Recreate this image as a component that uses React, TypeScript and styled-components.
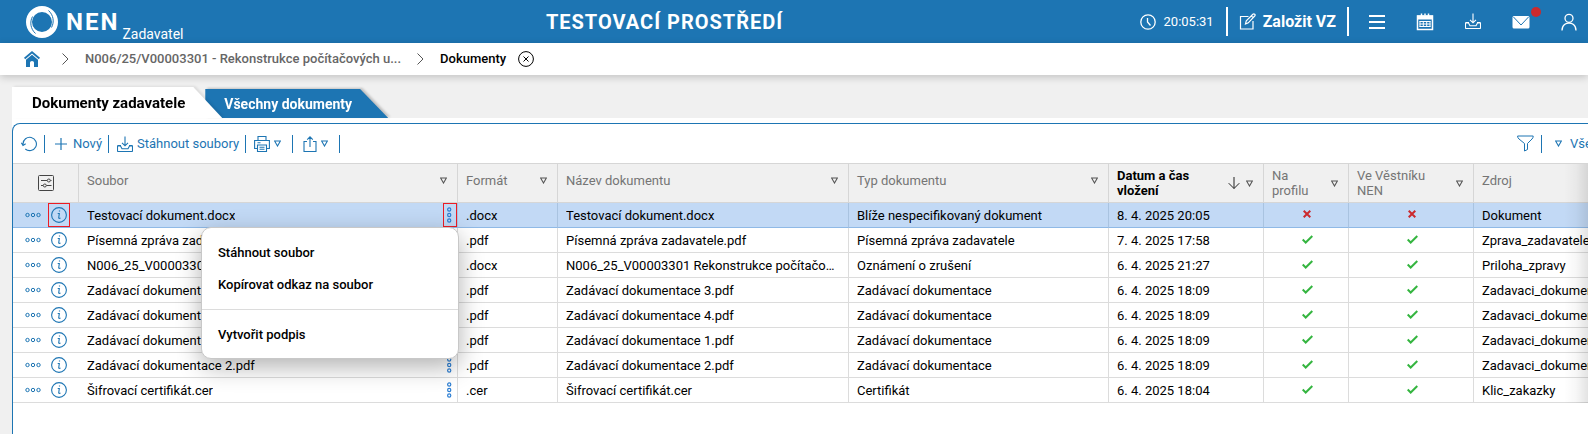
import React from "react";
import styled, { createGlobalStyle, css } from "styled-components";

const blue = "#1d75b3";

const GlobalStyle = createGlobalStyle`
  *, *::before, *::after { box-sizing: border-box; }
  body {
    margin: 0;
    background: #f0f0f0;
    color: #000;
    font-family: Roboto, "Liberation Sans", sans-serif;
    font-size: 13px;
    line-height: 16px;
  }
  button {
    font: inherit;
    color: inherit;
    background: none;
    border: 0;
    padding: 0;
    cursor: pointer;
  }
  a { color: inherit; text-decoration: none; }
  svg { display: block; flex: none; }
`;

const Page = styled.div`
  display: flex;
  flex-direction: column;
  min-height: 100vh;
  overflow: hidden;
`;

/* ---------- top bar ---------- */

const TopBar = styled.header`
  display: flex;
  align-items: center;
  justify-content: space-between;
  height: 43px;
  padding: 0 10px 0 26px;
  background: ${blue};
  color: #fff;
`;

const Brand = styled.a`
  display: flex;
  align-items: center;
  gap: 8px;
  padding-right: 6px;
`;

const BrandName = styled.span`
  font-size: 24px;
  line-height: 24px;
  font-weight: 700;
  letter-spacing: 2px;
`;

const BrandRole = styled.span`
  align-self: flex-end;
  margin-left: -5px;
  padding-top: 24px;
  font-size: 14px;
  line-height: 16px;
`;

const EnvTitle = styled.h1`
  margin: 0;
  font-size: 20px;
  line-height: 24px;
  font-weight: 700;
  letter-spacing: 1px;
`;

const TopTools = styled.div`
  display: flex;
  align-items: center;
`;

const Clock = styled.time`
  display: flex;
  align-items: center;
  gap: 8px;
  padding-right: 12px;
`;

const CreateButton = styled.button`
  display: flex;
  align-items: center;
  gap: 7px;
  height: 29px;
  padding: 0 11px;
  border: solid #fff;
  border-width: 0 2px;
  font-size: 16px;
  font-weight: 700;
`;

const TopIcons = styled.nav`
  display: flex;
  gap: 30px;
  padding-left: 19px;
`;

const TopIconButton = styled.button`
  position: relative;
  display: flex;
  justify-content: center;
  width: 18px;
`;

const Alert = styled.span`
  position: absolute;
  top: -6px;
  right: -11px;
  width: 10px;
  height: 10px;
  border-radius: 50%;
  background: #cb2a2e;
`;

/* ---------- breadcrumb ---------- */

const Crumbs = styled.nav`
  display: flex;
  align-items: center;
  height: 32px;
  padding-left: 24px;
  background: #fff;
  box-shadow: 0 2px 8px rgba(0, 0, 0, 0.2);
  font-weight: 500;
`;

const HomeLink = styled.a`
  padding-right: 6px;
`;

const CrumbLink = styled.a`
  color: #666;
`;

const Separator = styled.span`
  display: flex;
  padding: 0 16px;
`;

const CloseCrumb = styled.button`
  margin-left: 12px;
`;

/* ---------- tabs ---------- */

const Tabs = styled.div`
  display: flex;
  align-items: flex-end;
  padding: 12px 0 0 12px;
`;

const TabShadow = styled.div<{ $active?: boolean }>`
  position: relative;
  z-index: ${(p) => (p.$active ? 1 : 0)};
  margin-left: ${(p) => (p.$active ? "0" : "-17px")};
  filter: drop-shadow(2px -1px 1px rgba(0, 0, 0, ${(p) => (p.$active ? 0.08 : 0.2)}));
`;

const Tab = styled.button<{ $active?: boolean }>`
  display: block;
  font-weight: 700;
  ${(p) =>
    p.$active
      ? css`
          height: 31px;
          padding: 0 37px 0 20px;
          background: #fff;
          font-size: 15px;
          clip-path: polygon(0 0, calc(100% - 29px) 0, 100% 100%, 0 100%);
        `
      : css`
          height: 29px;
          padding: 0 36px 0 19px;
          background: ${blue};
          color: #fff;
          font-size: 14px;
          clip-path: polygon(0 0, calc(100% - 28px) 0, 100% 100%, 0 100%);
        `}
`;

/* ---------- panel ---------- */

const Sheet = styled.main`
  display: flex;
  flex: 1;
  margin-left: 12px;
  padding-top: 5px;
  background: #fff;
`;

const Panel = styled.section`
  flex: 1;
  min-width: 0;
  border: solid ${blue};
  border-width: 1px 0 0 1px;
  border-top-left-radius: 8px;
`;

const Toolbar = styled.div`
  display: flex;
  align-items: center;
  height: 39px;
  padding-left: 8px;
  color: ${blue};
`;

const Tool = styled.button<{ $left?: number; $right?: number; $gap?: number }>`
  display: flex;
  flex: none;
  align-items: center;
  gap: ${(p) => p.$gap ?? 4}px;
  height: 18px;
  padding: 0 ${(p) => p.$right ?? 6}px 0 ${(p) => p.$left ?? 8}px;
  border-right: 1px solid ${blue};
`;

const ToolbarEnd = styled.div`
  display: flex;
  width: 71px;
  margin-left: auto;
  overflow: hidden;
`;

const ViewPicker = styled.button`
  display: flex;
  flex: none;
  align-items: center;
  gap: 8px;
  padding-left: 13px;
`;

/* ---------- table ---------- */

const TableFrame = styled.div`
  position: relative;
`;

const EdgeFade = styled.div`
  position: absolute;
  inset: 1px 0 0 auto;
  width: 24px;
  background: linear-gradient(to right, rgba(0, 0, 0, 0), rgba(0, 0, 0, 0.03) 50%, rgba(0, 0, 0, 0.11));
  pointer-events: none;
`;

const Grid = styled.table`
  width: 100%;
  table-layout: fixed;
  border-collapse: separate;
  border-spacing: 0;
`;

const Col = styled.col<{ $width?: number }>`
  width: ${(p) => (p.$width ? `${p.$width}px` : "auto")};
`;

const Th = styled.th<{ $strong?: boolean; $wrap?: boolean; $last?: boolean }>`
  height: 40px;
  padding: 0 10px ${(p) => (p.$wrap ? 0 : 6)}px 8px;
  border: solid #d6d6d6;
  border-width: 1px ${(p) => (p.$last ? 0 : 1)}px 1px 0;
  background: #f0f0f0;
  color: ${(p) => (p.$strong ? "#000" : "#757575")};
  font-weight: ${(p) => (p.$strong ? 700 : 400)};
  line-height: 15px;
  text-align: left;
`;

const HeadInner = styled.div`
  display: flex;
  align-items: center;
  justify-content: space-between;
  gap: 12px;
`;

const HeadTools = styled.span`
  display: flex;
  align-items: center;
  gap: 6px;
  color: #555;
`;

const HeadSettings = styled.button`
  display: block;
  margin: 6px auto 0 17px;
  color: #444;
`;

const Td = styled.td<{ $last?: boolean }>`
  position: relative;
  height: 25px;
  padding: 0 ${(p) => (p.$last ? 0 : 8)}px 0 8px;
  border: solid #dcdcdc;
  border-width: 0 ${(p) => (p.$last ? 0 : 1)}px 1px 0;
`;

const Tr = styled.tr<{ $selected?: boolean }>`
  ${(p) =>
    p.$selected &&
    css`
      background: #c2d9f5;
      ${Td} {
        border-right-color: #a9c3e0;
        border-bottom-color: #8fb9e6;
      }
    `}
`;

const ActionsTd = styled(Td)`
  padding: 0;
  border-right-width: 0;
`;

const Actions = styled.div`
  display: flex;
  align-items: center;
  gap: 7px;
  padding-left: 12px;
  color: ${blue};
`;

const IconButton = styled.button<{ $marked?: boolean; $width: number }>`
  display: flex;
  align-items: center;
  justify-content: center;
  width: ${(p) => p.$width}px;
  height: 24px;
  border: 1px solid ${(p) => (p.$marked ? "#ed1c24" : "transparent")};
`;

const CellText = styled.span`
  display: block;
  padding-top: 2px;
  overflow: hidden;
  text-overflow: ellipsis;
  white-space: nowrap;
`;

const ClippedText = styled(CellText)`
  text-overflow: clip;
`;

const FileTd = styled(Td)`
  padding-right: 0;
`;

const FileCell = styled.div`
  display: flex;
  align-items: center;
  justify-content: space-between;
`;

const Mark = styled.span`
  display: flex;
  justify-content: center;
  padding: 0 0 2px 2px;
`;

/* ---------- context menu ---------- */

const Menu = styled.div`
  position: absolute;
  z-index: 5;
  top: 100%;
  right: -2px;
  width: 258px;
  padding: 9px 0 7px;
  border: 1px solid #c8c8c8;
  border-radius: 10px;
  background: #fff;
  box-shadow: 0 8px 24px rgba(0, 0, 0, 0.3);
`;

const MenuItem = styled.button`
  display: block;
  width: 100%;
  height: 32px;
  padding: 0 16px;
  font-weight: 500;
  text-align: left;
`;

const MenuRule = styled.hr`
  height: 1px;
  margin: 8px 0 9px;
  border: 0;
  background: #dcdcdc;
`;

/* ---------- icons ---------- */

type IconProps = { size?: number; children: React.ReactNode; w?: number };

const Icon = ({ size = 16, w = 1, children }: IconProps) => (
  <svg width={size} height={size} viewBox={`0 0 ${size} ${size}`} fill="none" stroke="currentColor" strokeWidth={w} aria-hidden="true">
    {children}
  </svg>
);

const LogoIcon = () => (
  <svg width="32" height="32" viewBox="0 0 32 32" aria-hidden="true">
    <circle cx="16" cy="16" r="13" fill="none" stroke="#fff" strokeWidth="6" />
    <path d="M6.500 10.500C3.500 16 4.500 23 9.500 27.500M25.500 21.500C28.500 16 27.500 9 22.500 4.500" fill="none" stroke={blue} strokeWidth="1" />
  </svg>
);

const ClockIcon = () => (
  <Icon w={1.3}>
    <circle cx="8" cy="8" r="7.200" />
    <path d="M7.500 4v4l3 3.500" />
  </Icon>
);

const EditIcon = () => (
  <Icon size={17} w={1.200}>
    <path d="M9.500 3.500h-8v12.500h12.500v-8M6.500 11l.8-3.300 6.600-6.500q.9-.8 1.800 0t0 1.800L9.300 9.800zM12.300 2.800l2 2" />
  </Icon>
);

const MenuIcon = () => (
  <Icon size={18} w={2}>
    <path d="M1 3h16M1 9h16M1 15h16" />
  </Icon>
);

const CalendarIcon = () => (
  <Icon size={18}>
    <path d="M1.500 3h15v13.500h-15z" strokeWidth="1.500" />
    <path d="M1 2.500h16v4H1z" fill="currentColor" stroke="none" />
    <path d="M5.500 .5v3M12.500 .5v3M9 .5v2" strokeWidth="1.500" />
    <path d="M3.500 8.500h11M3.500 11h11M3.500 13.500h11M4 8v6M7.300 8v6M10.700 8v6M14 8v6" />
  </Icon>
);

const DownloadIcon = () => (
  <Icon w={1.100}>
    <path d="M8 .5v9M5 6.800l3 3 3-3" />
    <path d="M4 9.500H1.200q-.7 0-.7.700V14.800q0 .7.700.7h13.600q.7 0 .7-.7V10.200q0-.7-.7-.7H12M.8 10l2.700 0 1.500 2.800h6l1.500-2.800h2.700" />
  </Icon>
);

const MailIcon = () => (
  <svg width="18" height="18" viewBox="0 0 18 18" aria-hidden="true">
    <rect x=".5" y="3" width="17" height="12.500" rx="1.500" fill="#fff" />
    <path d="M1.500 4l7.500 8 7.500-8" fill="none" stroke={blue} strokeWidth="1" />
  </svg>
);

const UserIcon = () => (
  <Icon size={18} w={1.300}>
    <circle cx="9" cy="5.300" r="4" />
    <path d="M2 17.500q0-4 2.500-6 2-1.500 4.500-1.500t4.500 1.500q2.500 2 2.500 6" />
  </Icon>
);

const HomeIcon = () => (
  <svg width="16" height="16" viewBox="0 0 16 16" fill={blue} aria-hidden="true">
    <path d="M8 0L0 6.800l1.200 1.400L8 2.400l6.800 5.800L16 6.800z" />
    <path d="M8 3.700L2 8.800V16h4v-4.500q0-1.500 2-1.500t2 1.500V16h4V8.800z" />
  </svg>
);

const ChevronIcon = () => (
  <svg width="7" height="12" viewBox="0 0 7 12" fill="none" stroke="#555" aria-hidden="true">
    <path d="M.5 .5l5.500 5.500-5.500 5.500" />
  </svg>
);

const CloseIcon = () => (
  <Icon w={1}>
    <circle cx="8" cy="8" r="7.400" />
    <path d="M5.500 5.500l5 5M10.500 5.500l-5 5" />
  </Icon>
);

const RefreshIcon = () => (
  <Icon w={1.100}>
    <path d="M2 9.500V8a6.700 6.700 0 1 1 2.300 5M.3 6.800L2 9.500l2.700-1.700" />
  </Icon>
);

const PlusIcon = () => (
  <Icon size={12} w={1.200}>
    <path d="M6 0v12M0 6h12" />
  </Icon>
);

const PrinterIcon = () => (
  <Icon w={1.100}>
    <path d="M4 4.500v-4h8v4M3.500 12.500H.6v-8h14.800v8h-2.900M3.500 9h9v6.500h-9zM3.500 6.700h3M5.500 11.200h5M5.500 13.300h5" />
  </Icon>
);

const ShareIcon = () => (
  <svg width="14" height="16" viewBox="0 0 14 16" fill="none" stroke="currentColor" strokeWidth="1.100" aria-hidden="true">
    <path d="M4 5.500H1v10h12v-10h-3M7 11V1M4.200 3.600L7 .8l2.800 2.800" />
  </svg>
);

const Triangle = () => (
  <svg width="7" height="7" viewBox="0 0 7 7" fill="none" stroke="currentColor" strokeWidth="1.100" aria-hidden="true">
    <path d="M.6 1h5.800L3.500 6z" />
  </svg>
);

const FunnelIcon = () => (
  <Icon size={17}>
    <path d="M.6 1h15.600q0 2-1.200 3l-4.500 4.500v6l-3 1.500V8.500L2 4Q.6 3 .6 1z" />
  </Icon>
);

const SlidersIcon = () => (
  <Icon>
    <rect x=".5" y=".5" width="15" height="15" rx="1" />
    <path d="M3 5.500h6M12.500 5.500h1M3 10.500h2M8.500 10.500h5" />
    <circle cx="10.800" cy="5.500" r="1.500" />
    <circle cx="6.800" cy="10.500" r="1.500" />
  </Icon>
);

const ArrowDown = () => (
  <svg width="12" height="12" viewBox="0 0 12 12" fill="none" stroke="#222" aria-hidden="true">
    <path d="M6 0v11.500M.7 6.200L6 11.500l5.300-5.300" />
  </svg>
);

const DotsIcon = () => (
  <svg width="16" height="6" viewBox="0 0 16 6" fill="none" stroke="currentColor" aria-hidden="true">
    <circle cx="2.500" cy="3" r="1.700" />
    <circle cx="8" cy="3" r="1.700" />
    <circle cx="13.500" cy="3" r="1.700" />
  </svg>
);

const VerticalDotsIcon = () => (
  <svg width="6" height="16" viewBox="1 0 6 16" fill="none" stroke="#2d7fd3" strokeWidth="1.200" aria-hidden="true">
    <circle cx="3.200" cy="2.500" r="1.600" />
    <circle cx="3.200" cy="8" r="1.600" />
    <circle cx="3.200" cy="13.500" r="1.600" />
  </svg>
);

const InfoIcon = () => (
  <Icon w={1.100}>
    <circle cx="8" cy="8" r="7.400" />
    <path d="M6.700 6.500h1.600l-.6 4.500q.5.700 1.800 0M7.900 4h1.200" />
  </Icon>
);

const CrossMark = () => (
  <svg width="8" height="8" viewBox="0 0 8 8" fill="none" stroke="#cb2a2e" strokeWidth="2" role="img" aria-label="Ne">
    <path d="M.7 .7l6.600 6.600M7.300 .7L.7 7.300" />
  </svg>
);

const CheckMark = () => (
  <svg width="11" height="9" viewBox="0 0 11 9" fill="none" stroke="#35b540" strokeWidth="2" role="img" aria-label="Ano">
    <path d="M.7 4.500l3 3L10.300 1" />
  </svg>
);

/* ---------- data ---------- */

type Doc = {
  file: string;
  format: string;
  name: string;
  type: string;
  date: string;
  published: boolean;
  source: string;
};

const docs: Doc[] = [
  { file: "Testovací dokument.docx", format: ".docx", name: "Testovací dokument.docx", type: "Blíže nespecifikovaný dokument", date: "8. 4. 2025 20:05", published: false, source: "Dokument" },
  { file: "Písemná zpráva zadavatele.pdf", format: ".pdf", name: "Písemná zpráva zadavatele.pdf", type: "Písemná zpráva zadavatele", date: "7. 4. 2025 17:58", published: true, source: "Zprava_zadavatele" },
  { file: "N006_25_V00003301.docx", format: ".docx", name: "N006_25_V00003301 Rekonstrukce počítačových", type: "Oznámení o zrušení", date: "6. 4. 2025 21:27", published: true, source: "Priloha_zpravy" },
  { file: "Zadávací dokumentace 3.pdf", format: ".pdf", name: "Zadávací dokumentace 3.pdf", type: "Zadávací dokumentace", date: "6. 4. 2025 18:09", published: true, source: "Zadavaci_dokumentace" },
  { file: "Zadávací dokumentace 4.pdf", format: ".pdf", name: "Zadávací dokumentace 4.pdf", type: "Zadávací dokumentace", date: "6. 4. 2025 18:09", published: true, source: "Zadavaci_dokumentace" },
  { file: "Zadávací dokumentace 1.pdf", format: ".pdf", name: "Zadávací dokumentace 1.pdf", type: "Zadávací dokumentace", date: "6. 4. 2025 18:09", published: true, source: "Zadavaci_dokumentace" },
  { file: "Zadávací dokumentace 2.pdf", format: ".pdf", name: "Zadávací dokumentace 2.pdf", type: "Zadávací dokumentace", date: "6. 4. 2025 18:09", published: true, source: "Zadavaci_dokumentace" },
  { file: "Šifrovací certifikát.cer", format: ".cer", name: "Šifrovací certifikát.cer", type: "Certifikát", date: "6. 4. 2025 18:04", published: true, source: "Klic_zakazky" },
];

type Column = { label: string; width?: number; wrap?: boolean; sorted?: boolean; last?: boolean };

const columns: Column[] = [
  { label: "Soubor", width: 379 },
  { label: "Formát", width: 100 },
  { label: "Název dokumentu", width: 291 },
  { label: "Typ dokumentu", width: 260 },
  { label: "Datum a čas vložení", width: 155, wrap: true, sorted: true },
  { label: "Na profilu", width: 85, wrap: true },
  { label: "Ve Věstníku NEN", width: 125, wrap: true },
  { label: "Zdroj", last: true },
];

const ContextMenu = () => (
  <Menu role="menu">
    <MenuItem role="menuitem">Stáhnout soubor</MenuItem>
    <MenuItem role="menuitem">Kopírovat odkaz na soubor</MenuItem>
    <MenuRule />
    <MenuItem role="menuitem">Vytvořit podpis</MenuItem>
  </Menu>
);

const DocRow = ({ doc, selected }: { doc: Doc; selected: boolean }) => (
  <Tr $selected={selected}>
    <ActionsTd>
      <Actions>
        <IconButton $width={16} aria-label="Akce"><DotsIcon /></IconButton>
        <IconButton $width={22} $marked={selected} aria-label="Detail"><InfoIcon /></IconButton>
      </Actions>
    </ActionsTd>
    <FileTd>
      <FileCell>
        <CellText>{doc.file}</CellText>
        <IconButton $width={14} $marked={selected} aria-label="Nabídka souboru"><VerticalDotsIcon /></IconButton>
      </FileCell>
      {selected && <ContextMenu />}
    </FileTd>
    <Td><CellText>{doc.format}</CellText></Td>
    <Td><CellText>{doc.name}</CellText></Td>
    <Td><CellText>{doc.type}</CellText></Td>
    <Td><CellText>{doc.date}</CellText></Td>
    <Td><Mark>{doc.published ? <CheckMark /> : <CrossMark />}</Mark></Td>
    <Td><Mark>{doc.published ? <CheckMark /> : <CrossMark />}</Mark></Td>
    <Td $last><ClippedText>{doc.source}</ClippedText></Td>
  </Tr>
);

export default function App() {
  return (
    <Page>
      <GlobalStyle />
      <TopBar>
        <Brand href="#">
          <LogoIcon />
          <BrandName>NEN</BrandName>
          <BrandRole>Zadavatel</BrandRole>
        </Brand>
        <EnvTitle>TESTOVACÍ PROSTŘEDÍ</EnvTitle>
        <TopTools>
          <Clock><ClockIcon />20:05:31</Clock>
          <CreateButton><EditIcon />Založit VZ</CreateButton>
          <TopIcons>
            <TopIconButton aria-label="Menu"><MenuIcon /></TopIconButton>
            <TopIconButton aria-label="Kalendář"><CalendarIcon /></TopIconButton>
            <TopIconButton aria-label="Stažené soubory"><DownloadIcon /></TopIconButton>
            <TopIconButton aria-label="Zprávy"><MailIcon /><Alert /></TopIconButton>
            <TopIconButton aria-label="Uživatel"><UserIcon /></TopIconButton>
          </TopIcons>
        </TopTools>
      </TopBar>

      <Crumbs>
        <HomeLink href="#" aria-label="Domů"><HomeIcon /></HomeLink>
        <Separator><ChevronIcon /></Separator>
        <CrumbLink href="#">N006/25/V00003301 - Rekonstrukce počítačových u...</CrumbLink>
        <Separator><ChevronIcon /></Separator>
        <span>Dokumenty</span>
        <CloseCrumb aria-label="Zavřít"><CloseIcon /></CloseCrumb>
      </Crumbs>

      <Tabs>
        <TabShadow $active><Tab $active>Dokumenty zadavatele</Tab></TabShadow>
        <TabShadow><Tab>Všechny dokumenty</Tab></TabShadow>
      </Tabs>

      <Sheet>
        <Panel>
          <Toolbar>
            <Tool $left={0} $right={7} aria-label="Obnovit"><RefreshIcon /></Tool>
            <Tool $left={10} $gap={6}><PlusIcon />Nový</Tool>
            <Tool><DownloadIcon />Stáhnout soubory</Tool>
            <Tool $right={11} aria-label="Tisk"><PrinterIcon /><Triangle /></Tool>
            <Tool $left={10} $right={11} aria-label="Sdílet"><ShareIcon /><Triangle /></Tool>
            <ToolbarEnd>
              <Tool $left={0} $right={7} aria-label="Filtr"><FunnelIcon /></Tool>
              <ViewPicker><Triangle />Vše</ViewPicker>
            </ToolbarEnd>
          </Toolbar>

          <TableFrame>
            <Grid>
              <colgroup>
                <Col $width={66} />
                {columns.map((c) => <Col key={c.label} $width={c.width} />)}
              </colgroup>
              <thead>
                <tr>
                  <Th><HeadSettings aria-label="Nastavení sloupců"><SlidersIcon /></HeadSettings></Th>
                  {columns.map((c) => (
                    <Th key={c.label} $wrap={c.wrap} $strong={c.sorted} $last={c.last}>
                      <HeadInner>
                        <span>{c.label}</span>
                        {!c.last && (
                          <HeadTools>
                            {c.sorted && <ArrowDown />}
                            <Triangle />
                          </HeadTools>
                        )}
                      </HeadInner>
                    </Th>
                  ))}
                </tr>
              </thead>
              <tbody>
                {docs.map((d, i) => <DocRow key={d.file} doc={d} selected={i === 0} />)}
              </tbody>
            </Grid>
            <EdgeFade />
          </TableFrame>
        </Panel>
      </Sheet>
    </Page>
  );
}
